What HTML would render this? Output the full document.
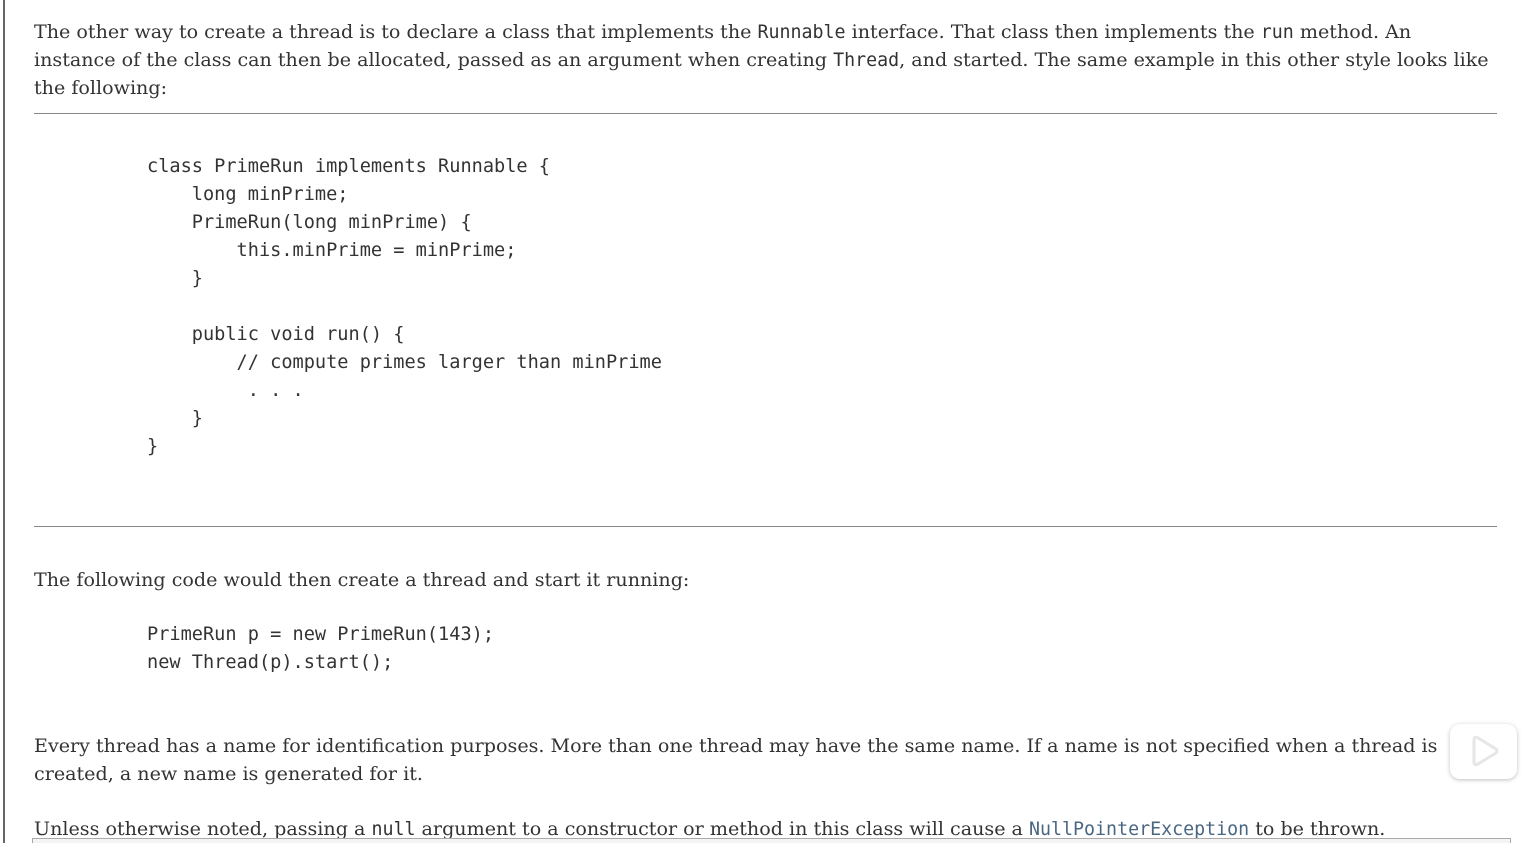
<!DOCTYPE html>
<html><head><meta charset="utf-8"><style>
html,body{margin:0;padding:0;background:#fff;width:1530px;height:843px;overflow:hidden;position:relative}
.lb{position:absolute;left:3px;top:0;width:2px;height:843px;background:#666}
.t{position:absolute;left:34px;font-family:"DejaVu Serif",serif;font-size:19.1px;color:#333;line-height:28px;white-space:nowrap}
.c{font-family:"DejaVu Sans Mono","Liberation Mono",monospace;font-size:18.3px;color:#333}
pre{position:absolute;left:147px;margin:0;font-family:"DejaVu Sans Mono","Liberation Mono",monospace;font-size:18.6px;line-height:28px;color:#333}
.hr{position:absolute;left:34px;width:1463px;height:1px;background:#888}
.lnk{color:#4a6782}
.bot{position:absolute;left:32px;top:838px;width:1477px;height:5px;border:1px solid #aaa;border-bottom:none;background:#f4f4f4}
.tv{position:absolute;left:1450px;top:724px;width:67px;height:55px;border-radius:10px;background:#fff;box-shadow:0 1px 4px rgba(0,0,0,.25)}
</style></head><body>
<div class="lb"></div>
<div class="t" style="top:18px">The other way to create a thread is to declare a class that implements the <span class="c">Runnable</span> interface. That class then implements the <span class="c">run</span> method. An</div>
<div class="t" style="top:46px">instance of the class can then be allocated, passed as an argument when creating <span class="c">Thread</span>, and started. The same example in this other style looks like</div>
<div class="t" style="top:74px">the following:</div>
<div class="hr" style="top:113px"></div>
<pre style="top:153px">class PrimeRun implements Runnable {
    long minPrime;
    PrimeRun(long minPrime) {
        this.minPrime = minPrime;
    }

    public void run() {
        // compute primes larger than minPrime
         . . .
    }
}</pre>
<div class="hr" style="top:526px"></div>
<div class="t" style="top:566px">The following code would then create a thread and start it running:</div>
<pre style="top:621px">PrimeRun p = new PrimeRun(143);
new Thread(p).start();</pre>
<div class="t" style="top:732px">Every thread has a name for identification purposes. More than one thread may have the same name. If a name is not specified when a thread is</div>
<div class="t" style="top:760px">created, a new name is generated for it.</div>
<div class="t" style="top:815px">Unless otherwise noted, passing a <span class="c">null</span> argument to a constructor or method in this class will cause a <span class="c lnk">NullPointerException</span> to be thrown.</div>
<div class="tv"><svg width="67" height="55" viewBox="0 0 67 55"><path d="M24 16 L24 38 Q24 42 28 40 L46 29 Q48 27 46 25 L28 14 Q24 12 24 16Z" fill="none" stroke="#e6e6e6" stroke-width="3"/></svg></div>
<div class="bot"></div>
</body></html>
